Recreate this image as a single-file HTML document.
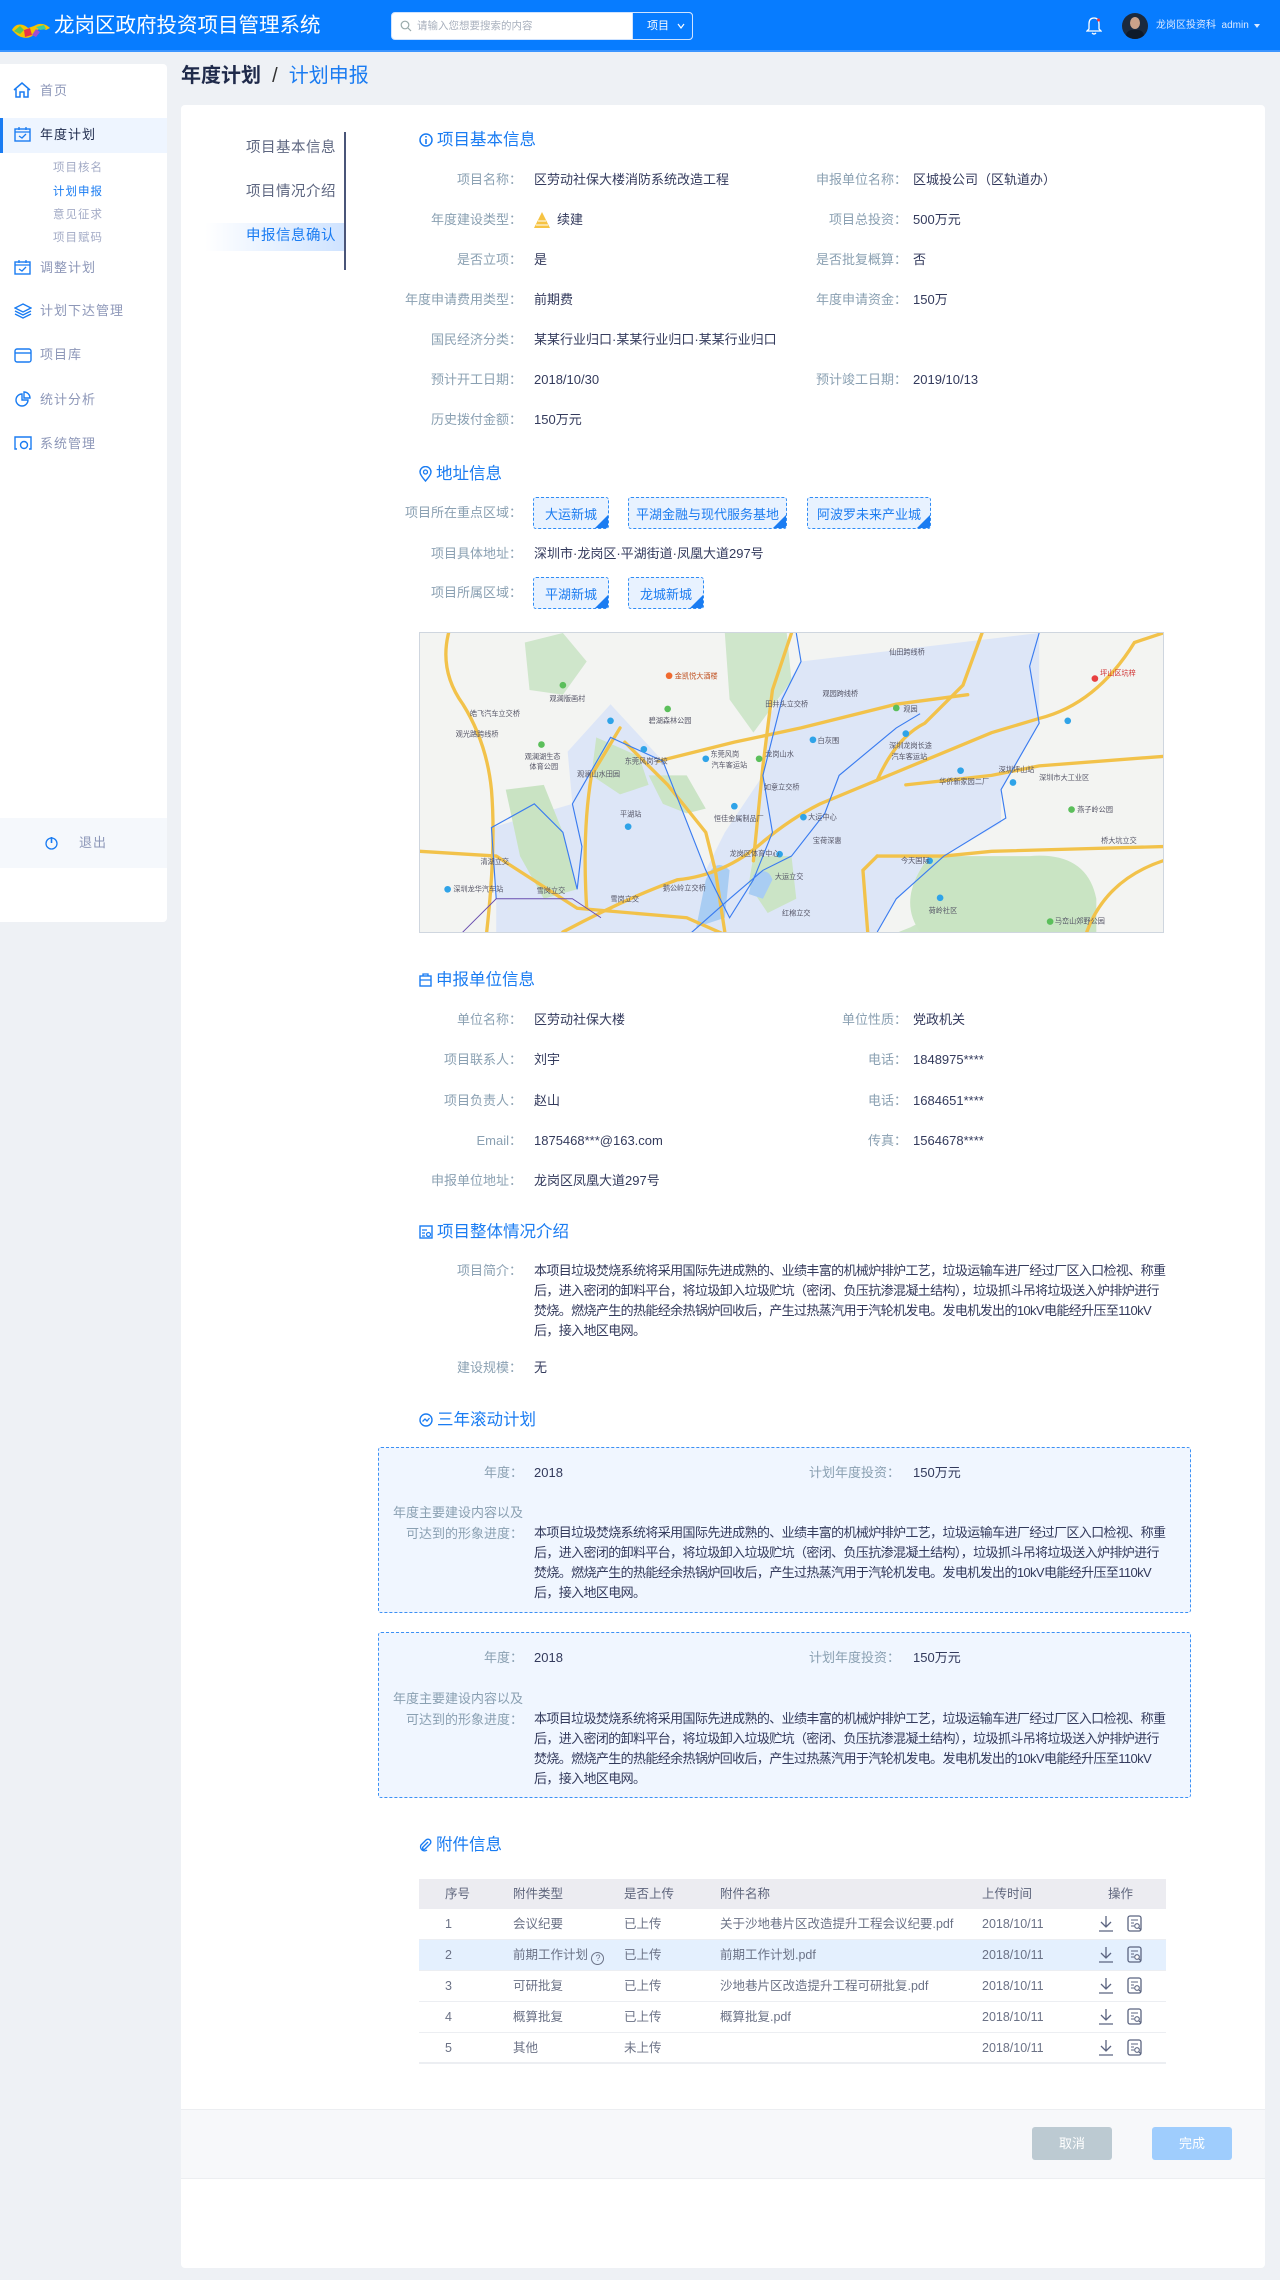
<!DOCTYPE html>
<html><head><meta charset="utf-8">
<style>
*{margin:0;padding:0;box-sizing:border-box}
body{width:1280px;height:2280px;background:#eef1f5;font-family:"Liberation Sans","Noto Sans CJK SC",sans-serif;position:relative;overflow:hidden;color:#333a5c;font-size:13px}
.a{position:absolute;white-space:nowrap}
.hdr{position:absolute;left:0;top:0;width:1280px;height:52px;background:#077cff;border-bottom:2px solid #3b95ff}
.side{position:absolute;left:0;top:64px;width:167px;height:858px;background:#fff;border-radius:0 4px 4px 0}
.si{position:absolute;left:40px;font-size:13px;color:#8d97b8;letter-spacing:1px;line-height:18px}
.sub{position:absolute;left:53px;font-size:11.5px;color:#a3abc6;letter-spacing:1px;line-height:16px}
.card{position:absolute;left:181px;top:105px;width:1084px;height:2163px;background:#fff;border-radius:4px}
.lb{position:absolute;text-align:right;color:#8aa0b2;font-size:13px;white-space:nowrap;line-height:18px}
.v{position:absolute;color:#333a5c;font-size:13px;white-space:nowrap;line-height:18px}
.st{position:absolute;left:419px;color:#1a7cf2;font-size:16.5px;white-space:nowrap;display:flex;align-items:center;gap:4px;line-height:22px}
.tag{position:absolute;height:32px;border:1px dashed #2f8cf5;background:#e8f2ff;color:#1c7cf0;font-size:13px;border-radius:3px;display:flex;align-items:center;justify-content:center;overflow:hidden}
.tag:after{content:"";position:absolute;right:0;bottom:0;border-style:solid;border-width:0 0 13px 13px;border-color:transparent transparent #1a7cf2 transparent}
.para{position:absolute;left:534px;width:634px;line-height:20px;white-space:normal;color:#333a5c;font-size:13px;letter-spacing:-0.62px}
.box{position:absolute;left:378px;width:813px;border:1.5px dashed #3b90f5;background:#f0f6ff;border-radius:3px}
.th,.tr{position:absolute;left:419px;width:747px;height:31px}
.th{background:#ececf1;color:#5f667d}
.tr{border-bottom:1px solid #eceef2;color:#6b7286}
.th span,.tr span{position:absolute;top:7px;font-size:12.5px;white-space:nowrap;line-height:17px}
</style></head><body>

<div class="hdr">
 <svg class="a" style="left:10px;top:18px" width="42" height="22" viewBox="0 0 42 22">
  <path d="M2 12 C6 4 14 6 18 10 L24 8 C30 4 36 6 40 10 L36 12 C30 9 26 12 24 16 C20 22 10 20 6 16Z" fill="#f5c400"/>
  <path d="M4 13 L10 8 L14 12 L10 16Z" fill="#5ac85a"/><path d="M14 12 L20 10 L22 17 L15 19Z" fill="#e8334a"/>
  <path d="M22 17 L26 11 L30 14 L26 19Z" fill="#a24fd0"/><path d="M26 9 L34 7 L36 11 L30 12Z" fill="#3bd0a0"/>
 </svg>
 <div class="a" style="left:54px;top:13px;color:#fff;font-size:20.5px;line-height:26px">龙岗区政府投资项目管理系统</div>
 <div class="a" style="left:391px;top:12px;width:302px;height:28px;border:1px solid #cfe3ff;border-radius:4px;background:#fff"></div>
 <svg class="a" style="left:400px;top:20px" width="12" height="12" viewBox="0 0 12 12"><circle cx="5" cy="5" r="3.8" fill="none" stroke="#9aa" stroke-width="1.2"/><path d="M8 8 L11 11" stroke="#9aa" stroke-width="1.2"/></svg>
 <div class="a" style="left:417px;top:19px;color:#a8b0bd;font-size:10.5px;line-height:14px">请输入您想要搜索的内容</div>
 <div class="a" style="left:632px;top:12px;width:61px;height:28px;border:1px solid #cfe3ff;border-radius:0 4px 4px 0;background:#077cff"></div>
 <div class="a" style="left:647px;top:19px;color:#fff;font-size:11px;line-height:14px">项目</div>
 <svg class="a" style="left:677px;top:23px" width="8" height="6" viewBox="0 0 8 6"><path d="M1 1 L4 5 L7 1" fill="none" stroke="#fff" stroke-width="1.2"/></svg>
 <svg class="a" style="left:1086px;top:16px" width="16" height="20" viewBox="0 0 16 20"><path d="M8 2 C4 2 3 5 3 8 L3 13 L1 15 L15 15 L13 13 L13 8 C13 5 12 2 8 2Z M6 17 Q8 19 10 17" fill="none" stroke="#fff" stroke-width="1.3"/><circle cx="12.5" cy="4" r="1.5" fill="#f33"/></svg>
 <div class="a" style="left:1122px;top:13px;width:26px;height:26px;border-radius:50%;background:#1b2a3e;overflow:hidden"><div style="position:absolute;left:8px;top:4px;width:10px;height:12px;border-radius:50%;background:#caa28a"></div><div style="position:absolute;left:4px;top:17px;width:18px;height:12px;background:#0e1a2a;border-radius:6px 6px 0 0"></div></div>
 <div class="a" style="left:1156px;top:19px;color:#dbe9ff;font-size:10px;line-height:14px">龙岗区投资科&nbsp;&nbsp;admin</div>
 <div class="a" style="left:1254px;top:24px;border:3px solid transparent;border-top:4px solid #dbe9ff"></div>
</div>

<div class="side">
 <svg class="a" style="left:13px;top:18px" width="18" height="16" viewBox="0 0 18 16"><path d="M1 8 L9 1 L17 8 M3 7 L3 15 L7 15 L7 10 L11 10 L11 15 L15 15 L15 7" fill="none" stroke="#1a7cf2" stroke-width="1.5"/></svg>
 <div class="si" style="top:18px">首页</div>
 <div class="a" style="left:0;top:54px;width:167px;height:35px;background:#eef5ff;border-left:3px solid #1a7cf2"></div>
 <svg class="a" style="left:14px;top:62px" width="17" height="17" viewBox="0 0 17 17"><rect x="1" y="3" width="15" height="12" fill="none" stroke="#1a7cf2" stroke-width="1.4"/><path d="M1 6 H16 M5 1 V4 M12 1 V4 M5 10 L8 12 L12 8" fill="none" stroke="#1a7cf2" stroke-width="1.3"/></svg>
 <div class="si" style="top:62px;color:#1f2b4d">年度计划</div>
 <div class="sub" style="top:96px">项目核名</div>
 <div class="sub" style="top:120px;color:#1a7cf2">计划申报</div>
 <div class="sub" style="top:143px">意见征求</div>
 <div class="sub" style="top:166px">项目赋码</div>
 <svg class="a" style="left:14px;top:195px" width="17" height="17" viewBox="0 0 17 17"><rect x="1" y="3" width="15" height="12" fill="none" stroke="#1a7cf2" stroke-width="1.4"/><path d="M1 6 H16 M5 1 V4 M12 1 V4 M5 10 L8 12 L12 8" fill="none" stroke="#1a7cf2" stroke-width="1.3"/></svg>
 <div class="si" style="top:195px">调整计划</div>
 <svg class="a" style="left:14px;top:239px" width="18" height="16" viewBox="0 0 18 16"><path d="M9 1 L17 5 L9 9 L1 5Z M1 8 L9 12 L17 8 M1 11 L9 15 L17 11" fill="none" stroke="#1a7cf2" stroke-width="1.4"/></svg>
 <div class="si" style="top:238px">计划下达管理</div>
 <svg class="a" style="left:14px;top:283px" width="18" height="16" viewBox="0 0 18 16"><rect x="1" y="2" width="16" height="13" rx="2" fill="none" stroke="#1a7cf2" stroke-width="1.4"/><path d="M1 6 H17" stroke="#1a7cf2" stroke-width="1.4"/></svg>
 <div class="si" style="top:282px">项目库</div>
 <svg class="a" style="left:14px;top:327px" width="18" height="16" viewBox="0 0 18 16"><path d="M8 3 A6 6 0 1 0 14 9 L8 9Z M10 1 A6 6 0 0 1 16 7 L10 7Z" fill="none" stroke="#1a7cf2" stroke-width="1.4"/></svg>
 <div class="si" style="top:327px">统计分析</div>
 <svg class="a" style="left:14px;top:371px" width="18" height="16" viewBox="0 0 18 16"><path d="M3 14 H1 V2 H17 V14 H15" fill="none" stroke="#1a7cf2" stroke-width="1.4"/><circle cx="10" cy="10" r="3.5" fill="none" stroke="#1a7cf2" stroke-width="1.4"/></svg>
 <div class="si" style="top:371px">系统管理</div>
 <div class="a" style="left:0;top:754px;width:167px;height:50px;background:#f5f8fc"></div>
 <svg class="a" style="left:44px;top:771px" width="15" height="15" viewBox="0 0 15 15"><circle cx="7.5" cy="8.5" r="5.5" fill="none" stroke="#1a7cf2" stroke-width="1.3"/><path d="M7.5 2 V8" stroke="#1a7cf2" stroke-width="1.6"/></svg>
 <div class="si" style="top:770px;left:79px">退出</div>
</div>

<div class="a" style="left:181px;top:63px;font-size:20px;line-height:26px;color:#1f2a4a;font-weight:bold">年度计划 <span style="font-weight:normal;color:#333">&nbsp;/&nbsp;</span> <span style="color:#1a7cf2;font-weight:normal">计划申报</span></div>

<div class="card"></div>
<div class="a" style="left:205px;top:223px;width:139px;height:28px;background:linear-gradient(90deg,#fff,#cfe3ff)"></div>
<div class="a" style="left:344px;top:132px;width:2px;height:138px;background:#4a5578"></div>
<div class="a" style="left:246px;top:138px;font-size:14.5px;line-height:20px;color:#5d6680;letter-spacing:0.5px">项目基本信息</div>
<div class="a" style="left:246px;top:182px;font-size:14.5px;line-height:20px;color:#5d6680;letter-spacing:0.5px">项目情况介绍</div>
<div class="a" style="left:246px;top:226px;font-size:14.5px;line-height:20px;color:#1a7cf2;letter-spacing:0.5px">申报信息确认</div>

<div class="st" style="top:129px"><svg width="14" height="14" viewBox="0 0 14 14"><circle cx="7" cy="7" r="6" fill="none" stroke="#1a7cf2" stroke-width="1.5"/><path d="M7 6 V11 M7 3 V4.5" stroke="#1a7cf2" stroke-width="1.6"/></svg>项目基本信息</div>
<div class="lb" style="right:758px;top:171px">项目名称：</div><div class="v" style="left:534px;top:171px">区劳动社保大楼消防系统改造工程</div>
<div class="lb" style="right:373px;top:171px">申报单位名称：</div><div class="v" style="left:913px;top:171px">区城投公司（区轨道办）</div>
<div class="lb" style="right:758px;top:211px">年度建设类型：</div>
<svg class="a" style="left:533px;top:211px" width="18" height="18" viewBox="0 0 18 18"><path d="M9 1 L17 17 H1Z" fill="#f6c343"/><path d="M5 10 H13 M3 14 H15" stroke="#fff" stroke-width="1"/></svg>
<div class="v" style="left:557px;top:211px">续建</div>
<div class="lb" style="right:373px;top:211px">项目总投资：</div><div class="v" style="left:913px;top:211px">500万元</div>
<div class="lb" style="right:758px;top:251px">是否立项：</div><div class="v" style="left:534px;top:251px">是</div>
<div class="lb" style="right:373px;top:251px">是否批复概算：</div><div class="v" style="left:913px;top:251px">否</div>
<div class="lb" style="right:758px;top:291px">年度申请费用类型：</div><div class="v" style="left:534px;top:291px">前期费</div>
<div class="lb" style="right:373px;top:291px">年度申请资金：</div><div class="v" style="left:913px;top:291px">150万</div>
<div class="lb" style="right:758px;top:331px">国民经济分类：</div><div class="v" style="left:534px;top:331px">某某行业归口·某某行业归口·某某行业归口</div>
<div class="lb" style="right:758px;top:371px">预计开工日期：</div><div class="v" style="left:534px;top:371px">2018/10/30</div>
<div class="lb" style="right:373px;top:371px">预计竣工日期：</div><div class="v" style="left:913px;top:371px">2019/10/13</div>
<div class="lb" style="right:758px;top:411px">历史拨付金额：</div><div class="v" style="left:534px;top:411px">150万元</div>

<div class="st" style="top:463px"><svg width="13" height="16" viewBox="0 0 13 16"><path d="M6.5 15 C2 10 1 8 1 6 A5.5 5.5 0 0 1 12 6 C12 8 11 10 6.5 15Z" fill="none" stroke="#1a7cf2" stroke-width="1.4"/><circle cx="6.5" cy="6" r="2" fill="none" stroke="#1a7cf2" stroke-width="1.3"/></svg>地址信息</div>
<div class="lb" style="right:758px;top:504px">项目所在重点区域：</div>
<div class="tag" style="left:533px;top:497px;width:76px">大运新城</div>
<div class="tag" style="left:628px;top:497px;width:159px">平湖金融与现代服务基地</div>
<div class="tag" style="left:807px;top:497px;width:124px">阿波罗未来产业城</div>
<div class="lb" style="right:758px;top:545px">项目具体地址：</div><div class="v" style="left:534px;top:545px">深圳市·龙岗区·平湖街道·凤凰大道297号</div>
<div class="lb" style="right:758px;top:584px">项目所属区域：</div>
<div class="tag" style="left:533px;top:577px;width:76px">平湖新城</div>
<div class="tag" style="left:628px;top:577px;width:76px">龙城新城</div>

<svg class="a" style="left:419px;top:632px;border:1px solid #cfd6df" width="745" height="301" viewBox="0 0 1560 630" preserveAspectRatio="none">
 <rect width="1560" height="630" fill="#f3f4f2"/>
 <path d="M160 560 L150 410 L320 360 L310 250 L400 150 L510 270 L600 500 L640 420 L720 300 L730 180 L800 60 L1300 0 L1300 190 L1220 330 L1220 400 L1100 470 L1000 560 L960 630 L160 630Z" fill="#dde6f7"/>
 <path d="M1005 630 L1030 620 Q1100 580 1290 570 Q1380 580 1400 630Z" fill="#cbe5c6"/>
 <path d="M220 20 L300 0 L350 60 L300 130 L230 120Z" fill="#cfe6cb"/>
 <path d="M640 0 L770 0 L780 100 L700 210 L650 140Z" fill="#cfe6cb"/>
 <path d="M180 330 L260 320 L300 420 L330 540 L260 560 L210 470Z" fill="#c9e3c3"/>
 <path d="M370 220 L460 260 L480 320 L420 340 L360 300Z" fill="#cbe4c6"/>
 <path d="M480 300 L560 300 L600 370 L560 380 L510 360Z" fill="#cbe4c6"/>
 <path d="M700 470 L780 470 L790 560 L730 590 L690 530Z" fill="#cbe4c6"/>
 <path d="M1070 470 L1280 470 Q1400 460 1420 560 L1420 630 L1050 630 Q1000 560 1070 470Z" fill="#c9e4c3"/>
 <path d="M600 520 Q620 470 650 500 L640 600 L580 620Z" fill="#a9cdf3"/>
 <path d="M700 510 Q730 490 740 520 L720 560 L690 550Z" fill="#a9cdf3"/>
 <g fill="none" stroke="#f2c24a" stroke-width="7" stroke-linecap="round">
  <path d="M60 0 Q40 80 90 150 Q140 230 150 330 Q160 450 140 630"/>
  <path d="M0 460 L160 470 L330 580 L560 600 L650 640"/>
  <path d="M350 580 Q340 420 360 300 L420 200"/>
  <path d="M300 630 Q430 560 540 520 Q640 510 720 440 Q780 390 840 360 L960 310 L1200 210 L1300 180 Q1420 150 1500 20 L1560 0"/>
  <path d="M960 310 Q1000 220 1060 190 L1140 110 L1180 0"/>
  <path d="M780 0 L740 120 L720 280 L700 480"/>
  <path d="M1020 320 L1200 300 L1300 280 L1560 260"/>
  <path d="M640 630 L620 500 L600 420 L520 320 L430 230"/>
  <path d="M960 470 L1100 470 L1200 460 L1560 450"/>
  <path d="M940 630 L930 500 L960 470"/>
  <path d="M1400 630 Q1440 520 1560 480"/>
  <path d="M500 270 L660 230 L800 200 L1000 150 L1150 130"/>
 </g>
 <g fill="none" stroke="#3a7cf0" stroke-width="2.4">
  <path d="M160 560 L150 410 L240 360 L300 420 L330 540 L340 450 L320 360 L400 220 L510 270 L600 500 L650 600 L700 520 L740 420 L720 300 L760 140 L800 60 L790 0"/>
  <path d="M560 640 L650 560 L720 500 L780 470 L850 380 L880 300 L1000 200 L1050 170"/>
  <path d="M1300 0 L1280 70 L1300 190 L1220 330 L1230 390 L1100 470 L1000 560 L960 630"/>
 </g>
 <path d="M80 640 L160 560 L320 560 L380 600" fill="none" stroke="#6a4fb0" stroke-width="2"/>
 <g fill="#5bbf5b"><circle cx="300" cy="110" r="7"/><circle cx="520" cy="160" r="7"/><circle cx="255" cy="235" r="7"/><circle cx="712" cy="265" r="7"/><circle cx="1000" cy="158" r="7"/><circle cx="1368" cy="372" r="7"/><circle cx="1323" cy="608" r="7"/></g>
 <g fill="#2fa3e8"><circle cx="400" cy="185" r="7"/><circle cx="470" cy="245" r="7"/><circle cx="600" cy="265" r="7"/><circle cx="825" cy="225" r="7"/><circle cx="1020" cy="212" r="7"/><circle cx="1135" cy="290" r="7"/><circle cx="1245" cy="315" r="7"/><circle cx="1360" cy="185" r="7"/><circle cx="437" cy="408" r="7"/><circle cx="660" cy="365" r="7"/><circle cx="805" cy="388" r="7"/><circle cx="755" cy="466" r="7"/><circle cx="1070" cy="480" r="7"/><circle cx="1092" cy="558" r="7"/><circle cx="58" cy="540" r="7"/></g>
 <circle cx="1417" cy="96" r="7" fill="#e84040"/><circle cx="523" cy="90" r="7" fill="#f06a30"/>
 <g font-size="15" fill="#556" font-family="Liberation Sans, Noto Sans CJK SC, sans-serif">
  <text x="105" y="175">皓飞汽车立交桥</text><text x="75" y="218">观光路跨线桥</text><text x="272" y="143">观澜版画村</text><text x="535" y="96" fill="#c05020">金凯悦大酒楼</text>
  <text x="480" y="190">碧湖森林公园</text><text x="725" y="155">田井头立交桥</text><text x="845" y="133">观园跨线桥</text><text x="985" y="45">仙田跨线桥</text>
  <text x="1015" y="165">观园</text><text x="835" y="232">白灰围</text><text x="220" y="265">观澜湖生态</text><text x="230" y="287">体育公园</text>
  <text x="430" y="275">东莞风岗学校</text><text x="610" y="260">东莞风岗</text><text x="612" y="283">汽车客运站</text><text x="725" y="260">龙岗山水</text>
  <text x="985" y="242">深圳龙岗长途</text><text x="990" y="265">汽车客运站</text><text x="1090" y="318">华侨新家园二厂</text><text x="1215" y="293">深圳坪山站</text>
  <text x="1300" y="310">深圳市大工业区</text><text x="1380" y="377">燕子岭公园</text><text x="1430" y="443">桥大坑立交</text><text x="1428" y="90" fill="#d03030">坪山区坑梓</text>
  <text x="330" y="302">观澜山水田园</text><text x="420" y="387">平湖站</text><text x="617" y="396">恒佳金属制品厂</text><text x="722" y="330">如意立交桥</text>
  <text x="815" y="393">大运中心</text><text x="825" y="442">宝荷深惠</text><text x="127" y="487">清湖立交</text><text x="70" y="545">深圳龙华汽车站</text>
  <text x="245" y="548">雪岗立交</text><text x="400" y="566">雪岗立交</text><text x="510" y="543">鹅公岭立交桥</text><text x="650" y="470">龙岗区体育中心</text>
  <text x="745" y="518">大运立交</text><text x="1010" y="485">今天国际</text><text x="1068" y="590">荷岭社区</text><text x="1333" y="612">马峦山郊野公园</text>
  <text x="760" y="595">红棉立交</text>
 </g>
</svg>

<div class="st" style="top:969px"><svg width="13" height="14" viewBox="0 0 13 14"><rect x="1" y="3" width="11" height="10" fill="none" stroke="#1a7cf2" stroke-width="1.4"/><path d="M4 3 V1 H9 V3 M1 7 H12" fill="none" stroke="#1a7cf2" stroke-width="1.3"/></svg>申报单位信息</div>
<div class="lb" style="right:758px;top:1011px">单位名称：</div><div class="v" style="left:534px;top:1011px">区劳动社保大楼</div>
<div class="lb" style="right:373px;top:1011px">单位性质：</div><div class="v" style="left:913px;top:1011px">党政机关</div>
<div class="lb" style="right:758px;top:1051px">项目联系人：</div><div class="v" style="left:534px;top:1051px">刘宇</div>
<div class="lb" style="right:373px;top:1051px">电话：</div><div class="v" style="left:913px;top:1051px">1848975****</div>
<div class="lb" style="right:758px;top:1092px">项目负责人：</div><div class="v" style="left:534px;top:1092px">赵山</div>
<div class="lb" style="right:373px;top:1092px">电话：</div><div class="v" style="left:913px;top:1092px">1684651****</div>
<div class="lb" style="right:758px;top:1132px">Email：</div><div class="v" style="left:534px;top:1132px">1875468***@163.com</div>
<div class="lb" style="right:373px;top:1132px">传真：</div><div class="v" style="left:913px;top:1132px">1564678****</div>
<div class="lb" style="right:758px;top:1172px">申报单位地址：</div><div class="v" style="left:534px;top:1172px">龙岗区凤凰大道297号</div>

<div class="st" style="top:1221px"><svg width="14" height="14" viewBox="0 0 14 14"><rect x="1" y="1" width="12" height="12" fill="none" stroke="#1a7cf2" stroke-width="1.4"/><path d="M3 5 H8 M3 8 H6 M3 11 H6" stroke="#1a7cf2" stroke-width="1.2"/><circle cx="9.5" cy="9.5" r="2" fill="none" stroke="#1a7cf2" stroke-width="1.2"/></svg>项目整体情况介绍</div>
<div class="lb" style="right:758px;top:1262px">项目简介：</div>
<div class="para" style="top:1261px">本项目垃圾焚烧系统将采用国际先进成熟的、业绩丰富的机械炉排炉工艺，垃圾运输车进厂经过厂区入口检视、称重后，进入密闭的卸料平台，将垃圾卸入垃圾贮坑（密闭、负压抗渗混凝土结构），垃圾抓斗吊将垃圾送入炉排炉进行焚烧。燃烧产生的热能经余热锅炉回收后，产生过热蒸汽用于汽轮机发电。发电机发出的10kV电能经升压至110kV后，接入地区电网。</div>
<div class="lb" style="right:758px;top:1359px">建设规模：</div><div class="v" style="left:534px;top:1359px">无</div>

<div class="st" style="top:1409px"><svg width="14" height="14" viewBox="0 0 14 14"><circle cx="7" cy="7" r="6" fill="none" stroke="#1a7cf2" stroke-width="1.4"/><path d="M3.5 8.5 L6 6 L8 8 L10.5 5" fill="none" stroke="#1a7cf2" stroke-width="1.3"/></svg>三年滚动计划</div>
<div class="box" style="top:1447px;height:166px"></div>
<div class="lb" style="right:757px;top:1464px">年度：</div><div class="v" style="left:534px;top:1464px">2018</div>
<div class="lb" style="right:380px;top:1464px">计划年度投资：</div><div class="v" style="left:913px;top:1464px">150万元</div>
<div class="lb" style="right:757px;top:1502px;line-height:21px">年度主要建设内容以及<br>可达到的形象进度：</div>
<div class="para" style="top:1523px;width:632px">本项目垃圾焚烧系统将采用国际先进成熟的、业绩丰富的机械炉排炉工艺，垃圾运输车进厂经过厂区入口检视、称重后，进入密闭的卸料平台，将垃圾卸入垃圾贮坑（密闭、负压抗渗混凝土结构），垃圾抓斗吊将垃圾送入炉排炉进行焚烧。燃烧产生的热能经余热锅炉回收后，产生过热蒸汽用于汽轮机发电。发电机发出的10kV电能经升压至110kV后，接入地区电网。</div>

<div class="box" style="top:1632px;height:166px"></div>
<div class="lb" style="right:757px;top:1649px">年度：</div><div class="v" style="left:534px;top:1649px">2018</div>
<div class="lb" style="right:380px;top:1649px">计划年度投资：</div><div class="v" style="left:913px;top:1649px">150万元</div>
<div class="lb" style="right:757px;top:1688px;line-height:21px">年度主要建设内容以及<br>可达到的形象进度：</div>
<div class="para" style="top:1709px;width:632px">本项目垃圾焚烧系统将采用国际先进成熟的、业绩丰富的机械炉排炉工艺，垃圾运输车进厂经过厂区入口检视、称重后，进入密闭的卸料平台，将垃圾卸入垃圾贮坑（密闭、负压抗渗混凝土结构），垃圾抓斗吊将垃圾送入炉排炉进行焚烧。燃烧产生的热能经余热锅炉回收后，产生过热蒸汽用于汽轮机发电。发电机发出的10kV电能经升压至110kV后，接入地区电网。</div>

<div class="st" style="top:1834px"><svg width="13" height="14" viewBox="0 0 13 14"><path d="M9 4 L4 9 A1.4 1.4 0 0 0 6 11 L11 6 A2.8 2.8 0 0 0 7 2 L2 7 A4 4 0 0 0 8 12" fill="none" stroke="#1a7cf2" stroke-width="1.4"/></svg>附件信息</div>
<div class="th" style="top:1879px;height:30px"><span style="left:26px">序号</span><span style="left:94px">附件类型</span><span style="left:205px">是否上传</span><span style="left:301px">附件名称</span><span style="left:563px">上传时间</span><span style="left:689px">操作</span></div>
<div class="tr" style="top:1909px"><span style="left:26px">1</span><span style="left:94px">会议纪要</span><span style="left:205px">已上传</span><span style="left:301px">关于沙地巷片区改造提升工程会议纪要.pdf</span><span style="left:563px">2018/10/11</span></div>
<div class="tr" style="top:1940px;background:#e4f0fe"><span style="left:26px">2</span><span style="left:94px">前期工作计划 <span style="position:static;display:inline-block;width:13px;height:13px;border:1px solid #6b7286;border-radius:50%;font-size:9px;text-align:center;line-height:11px;vertical-align:-2px">?</span></span><span style="left:205px">已上传</span><span style="left:301px">前期工作计划.pdf</span><span style="left:563px">2018/10/11</span></div>
<div class="tr" style="top:1971px"><span style="left:26px">3</span><span style="left:94px">可研批复</span><span style="left:205px">已上传</span><span style="left:301px">沙地巷片区改造提升工程可研批复.pdf</span><span style="left:563px">2018/10/11</span></div>
<div class="tr" style="top:2002px"><span style="left:26px">4</span><span style="left:94px">概算批复</span><span style="left:205px">已上传</span><span style="left:301px">概算批复.pdf</span><span style="left:563px">2018/10/11</span></div>
<div class="tr" style="top:2033px;border-bottom:2px solid #eceef2"><span style="left:26px">5</span><span style="left:94px">其他</span><span style="left:205px">未上传</span><span style="left:563px">2018/10/11</span></div>
<svg class="a" style="left:1097px;top:1915px" width="48" height="150" viewBox="0 0 48 150">
 <defs><g id="ic"><path d="M9 1 V12 M4 7 L9 12 L14 7 M2 16 H16" fill="none" stroke="#5b6480" stroke-width="1.3"/><rect x="31" y="1" width="13" height="15" rx="2" fill="none" stroke="#5b6480" stroke-width="1.3"/><path d="M34 5 H41 M34 8 H37 M34 11 H37" stroke="#5b6480" stroke-width="1.1"/><circle cx="40" cy="11" r="2.3" fill="#fff" stroke="#5b6480" stroke-width="1.1"/><path d="M41.6 12.6 L44 15" stroke="#5b6480" stroke-width="1.2"/></g></defs>
 <use href="#ic"/><use href="#ic" y="31"/><use href="#ic" y="62"/><use href="#ic" y="93"/><use href="#ic" y="124"/>
</svg>

<div class="a" style="left:181px;top:2109px;width:1084px;height:70px;background:#f7f8fa;border-top:1px solid #eceef1;border-bottom:1px solid #eceef1"></div>
<div class="a" style="left:1032px;top:2127px;width:80px;height:33px;background:#bccad2;border-radius:3px;color:#fff;font-size:13px;text-align:center;line-height:33px">取消</div>
<div class="a" style="left:1152px;top:2127px;width:80px;height:33px;background:#9fcdfd;border-radius:3px;color:#fff;font-size:13px;text-align:center;line-height:33px">完成</div>
</body></html>
